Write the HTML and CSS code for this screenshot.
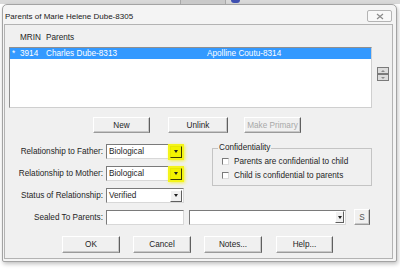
FILE: index.html
```html
<!DOCTYPE html>
<html lang="en">
<head>
    <meta charset="UTF-8">
    <title>Parents of Marie Helene Dube-8305</title>
    <link rel="stylesheet" href="styles.css">
</head>
<body>
    <div class="backdrop">
        <span class="tab"></span>
        <span class="dot"></span>
    </div>
    <div class="dialog">
        <div class="titlebar">
            <span class="title">Parents of Marie Helene Dube-8305</span>
            <span class="close">
                <svg width="8" height="7" viewBox="0 0 8 7"><path d="M1 1 L7 6 M7 1 L1 6" stroke="#8a8a8a" stroke-width="1.2" fill="none"/></svg>
            </span>
        </div>
        <div class="client">
            <div class="list-head">
                <span class="head-mrin">MRIN</span>
                <span>Parents</span>
            </div>
            <div class="list-row">
                <div class="listbox">
                    <div class="row selected">
                        <span class="col-star">*</span>
                        <span class="col-mrin">3914</span>
                        <span class="col-father">Charles Dube-8313</span>
                        <span>Apolline Coutu-8314</span>
                    </div>
                </div>
                <div class="spin">
                    <span class="spin-btn"><span class="tri-up"></span></span>
                    <span class="spin-btn"><span class="tri-down"></span></span>
                </div>
            </div>

            <div class="actions">
                <button class="btn btn-new">New</button>
                <button class="btn btn-unlink">Unlink</button>
                <button class="btn btn-primary" disabled>Make Primary</button>
            </div>

            <div class="details">
                <div class="fields">
                    <label class="field-label">Relationship to Father:</label>
                    <div class="select">
                        <span class="select-value">Biological</span>
                        <span class="arrow marked"><span class="tri-down"></span></span>
                    </div>
                    <label class="field-label">Relationship to Mother:</label>
                    <div class="select">
                        <span class="select-value">Biological</span>
                        <span class="arrow marked"><span class="tri-down"></span></span>
                    </div>
                    <label class="field-label">Status of Relationship:</label>
                    <div class="select">
                        <span class="select-value">Verified</span>
                        <span class="arrow"><span class="tri-down"></span></span>
                    </div>
                </div>
                <fieldset class="group">
                    <legend>Confidentiality</legend>
                    <div class="check"><span class="box"></span>Parents are confidential to child</div>
                    <div class="check"><span class="box"></span>Child is confidential to parents</div>
                </fieldset>
            </div>

            <div class="sealed">
                <label class="field-label">Sealed To Parents:</label>
                <div class="input"></div>
                <div class="select wide">
                    <span class="select-value"></span>
                    <span class="arrow"><span class="tri-down"></span></span>
                </div>
                <button class="btn btn-s">S</button>
            </div>

            <div class="footer-buttons">
                <button class="btn btn-ok">OK</button>
                <button class="btn btn-cancel">Cancel</button>
                <button class="btn btn-notes">Notes...</button>
                <button class="btn btn-help">Help...</button>
            </div>
        </div>
    </div>
</body>
</html>
```

FILE: styles.css
```css
body {
    margin: 0;
    width: 400px;
    height: 270px;
    overflow: hidden;
    background-color: #ffffff;
    font-family: "Liberation Sans", Arial, sans-serif;
    font-size: 8.2px;
    color: #1e1e1e;
}

.backdrop {
    height: 4px;
    background-color: #d9d9d9;
    display: flex;
    align-items: flex-start;
}

.backdrop .tab {
    margin-left: 180px;
    width: 44px;
    height: 4px;
    border-left: 1px solid #a8a8a8;
    border-right: 1px solid #a8a8a8;
    background-color: #c9c9c9;
}

.backdrop .dot {
    margin-left: 5px;
    width: 9px;
    height: 3px;
    border-radius: 0 0 5px 5px;
    background-color: #3f4fb0;
}

.dialog {
    margin: 0 3px 0 2px;
    height: 258px;
    box-sizing: border-box;
    border: 1px solid #a3a3a3;
    border-radius: 5px 5px 2px 2px;
    background-color: #f4f4f4;
    padding: 0 3px 2px 1px;
    display: flex;
    flex-direction: column;
    box-shadow: 1px 2px 4px rgba(0, 0, 0, 0.25);
}

.titlebar {
    height: 19px;
    display: flex;
    align-items: center;
    justify-content: space-between;
}

.title {
    font-size: 8px;
    color: #202020;
    padding-left: 1px;
    padding-top: 4px;
}

.close {
    width: 25px;
    height: 12px;
    margin-top: 3px;
    margin-right: 1px;
    box-sizing: border-box;
    border: 1px solid #b4b4b4;
    border-radius: 2px;
    background-color: #f8f8f8;
    display: flex;
    align-items: center;
    justify-content: center;
}

.client {
    flex: 1;
    border: 1px solid #b3b3b3;
    background-color: #f0f0f0;
}

.list-head {
    height: 22px;
    box-sizing: border-box;
    padding: 8px 0 0 15px;
    line-height: 10px;
    display: flex;
}

.head-mrin {
    width: 26px;
}

.list-row {
    display: flex;
    align-items: flex-start;
    padding-left: 4px;
}

.listbox {
    width: 363px;
    height: 61px;
    box-sizing: border-box;
    border: 1px solid #8f8f8f;
    border-right-color: #cfcfcf;
    border-bottom-color: #cfcfcf;
    background-color: #ffffff;
}

.row {
    height: 11px;
    line-height: 11px;
    display: flex;
}

.row.selected {
    background-color: #3399ff;
    color: #ffffff;
}

.col-star {
    width: 8px;
    padding-left: 2px;
}

.col-mrin {
    width: 26px;
}

.col-father {
    width: 161px;
}

.spin {
    margin: 20px 0 0 5px;
    display: flex;
    flex-direction: column;
}

.spin-btn {
    width: 12px;
    height: 7px;
    box-sizing: border-box;
    border: 1px solid #7a7a7a;
    background-color: #dcdcdc;
    display: flex;
    align-items: center;
    justify-content: center;
}

.tri-up {
    width: 0;
    height: 0;
    border-left: 2px solid transparent;
    border-right: 2px solid transparent;
    border-bottom: 2px solid #8a8a8a;
}

.tri-down {
    width: 0;
    height: 0;
    border-left: 2.5px solid transparent;
    border-right: 2.5px solid transparent;
    border-top: 3px solid #202020;
}

.spin .tri-down {
    border-top-color: #8a8a8a;
    border-left-width: 2px;
    border-right-width: 2px;
    border-top-width: 2px;
}

.btn {
    font-family: inherit;
    font-size: 8.2px;
    color: #1e1e1e;
    padding: 0;
    box-sizing: border-box;
    background-color: #f0f0f0;
    border-top: 1px solid #ffffff;
    border-left: 1px solid #ffffff;
    border-right: 1px solid #5f5f5f;
    border-bottom: 1px solid #9a9a9a;
    box-shadow: inset -1px -1px 0 #c8c8c8;
}

.btn:disabled {
    color: #a8a8a8;
}

.actions {
    display: flex;
    margin-top: 9px;
    padding-left: 88px;
    height: 16px;
}

.actions .btn {
    height: 16px;
}

.btn-new {
    width: 57px;
}

.btn-unlink {
    width: 60px;
    margin-left: 18px;
}

.btn-primary {
    width: 57px;
    margin-left: 16px;
}

.details {
    display: flex;
    align-items: flex-start;
    margin-top: 11px;
}

.fields {
    display: grid;
    grid-template-columns: 98px 78px;
    column-gap: 3px;
    row-gap: 7px;
    align-items: center;
}

.field-label {
    text-align: right;
    white-space: nowrap;
}

.select,
.input {
    height: 15px;
    box-sizing: border-box;
    border: 1px solid #7a7a7a;
    border-right-color: #d8d8d8;
    border-bottom-color: #d8d8d8;
    background-color: #ffffff;
    display: flex;
    align-items: center;
}

.select-value {
    flex: 1;
    padding-left: 2px;
    line-height: 13px;
}

.arrow {
    width: 12px;
    height: 12px;
    margin-right: 1px;
    box-sizing: border-box;
    background-color: #f0f0f0;
    border-top: 1px solid #ffffff;
    border-left: 1px solid #ffffff;
    border-right: 1px solid #5f5f5f;
    border-bottom: 1px solid #5f5f5f;
    display: flex;
    align-items: center;
    justify-content: center;
}

.arrow.marked {
    background-color: #f2f200;
    border-color: #e8e800 #3a3a00 #3a3a00 #e8e800;
    box-shadow: 0 0 0 2px #f4f41a, 1px 1px 3px 2px rgba(244, 244, 30, 0.8);
}

.group {
    margin: 0 0 0 28px;
    width: 160px;
    height: 42px;
    box-sizing: border-box;
    border: 1px solid #c4c4c4;
    padding: 0 0 0 9px;
}

.group legend {
    padding: 0 1px;
    margin-left: -4px;
    line-height: 8px;
}

.check {
    display: flex;
    align-items: center;
    height: 11px;
    margin-top: 4px;
}

.check + .check {
    margin-top: 3px;
}

.box {
    width: 7px;
    height: 7px;
    box-sizing: border-box;
    border: 1px solid #7a7a7a;
    border-right-color: #dcdcdc;
    border-bottom-color: #dcdcdc;
    background-color: #ffffff;
    margin-right: 5px;
}

.sealed {
    display: flex;
    align-items: center;
    margin-top: 6px;
}

.sealed .field-label {
    width: 98px;
}

.sealed .input {
    width: 78px;
    margin-left: 3px;
}

.select.wide {
    width: 157px;
    margin-left: 5px;
}

.select.wide .arrow {
    width: 9px;
    border-color: #ffffff #5f5f5f #5f5f5f #ffffff;
}

.btn-s {
    width: 16px;
    height: 16px;
    margin-left: 8px;
    color: #555555;
}

.footer-buttons {
    display: flex;
    margin-top: 11px;
    padding-left: 57px;
}

.footer-buttons .btn {
    height: 17px;
    width: 58px;
}

.btn-ok {
    width: 57px;
}

.btn-cancel {
    margin-left: 13px;
}

.btn-notes {
    margin-left: 13px;
}

.footer-buttons .btn-help {
    width: 57px;
    margin-left: 14px;
}
```
